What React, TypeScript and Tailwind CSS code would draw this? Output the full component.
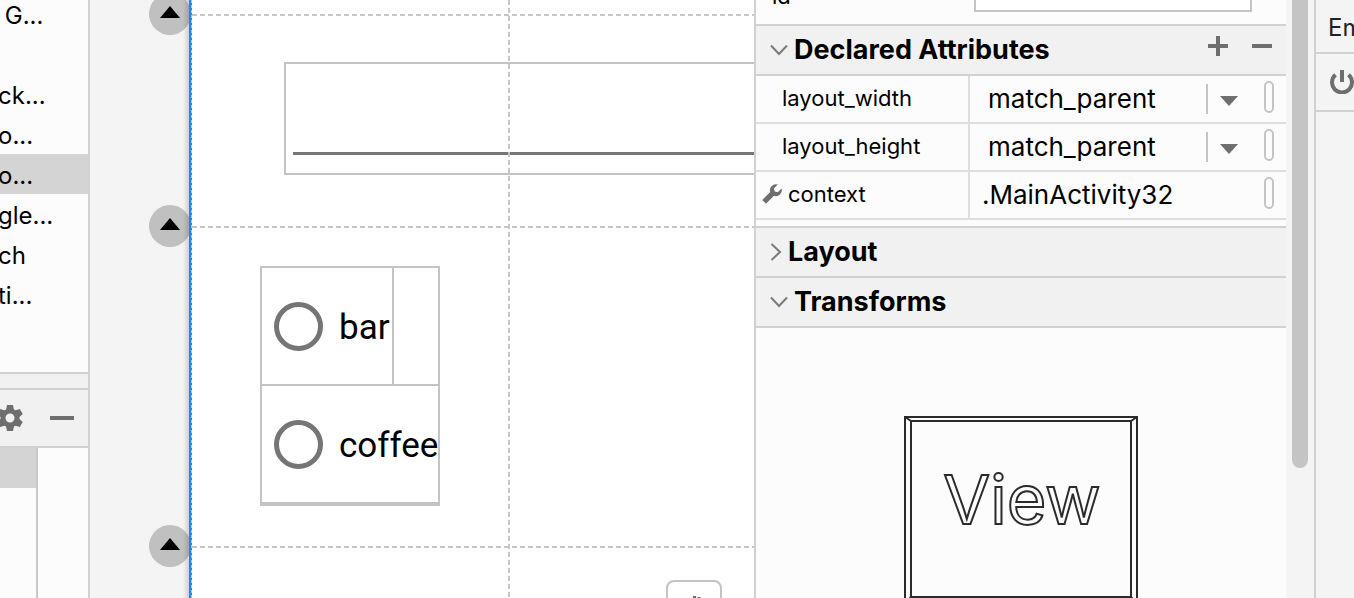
import { useState } from 'react'
import clsx from 'clsx'

interface Attribute {
  name: string
  value: string
  dropdown?: boolean
  tools?: boolean
}

const paletteItems = [
  { id: 1, label: ' G...' },
  { id: 2, label: '' },
  { id: 3, label: 'ck...' },
  { id: 4, label: 'o...' },
  { id: 5, label: 'o...', selected: true },
  { id: 6, label: 'gle...' },
  { id: 7, label: 'ch' },
  { id: 8, label: 'ti...' },
]

const declared: Attribute[] = [
  { name: 'layout_width', value: 'match_parent', dropdown: true },
  { name: 'layout_height', value: 'match_parent', dropdown: true },
  { name: 'context', value: '.MainActivity32', tools: true },
]

const dashX = 'bg-[repeating-linear-gradient(90deg,#c6c6c6_0_5px,transparent_5px_8px)]'
const dashY = 'bg-[repeating-linear-gradient(180deg,#c6c6c6_0_5px,transparent_5px_8px)]'

function Chevron({ open }: { open: boolean }) {
  return open ? (
    <svg width="18" height="18" viewBox="0 0 18 18" fill="none" stroke="#7a7a7a" strokeWidth="2">
      <path d="M1 4.5 9 13l8-8.5" />
    </svg>
  ) : (
    <svg width="12" height="18" viewBox="0 0 12 18" fill="none" stroke="#7a7a7a" strokeWidth="2">
      <path d="M1.500 1 10 9l-8.500 8" />
    </svg>
  )
}

function Gear() {
  return (
    <svg width="26" height="26" viewBox="-13 -13 26 26" className="shrink-0">
      <g fill="#6e6e6e">
        {[0, 60, 120, 180, 240, 300].map(a => (
          <path key={a} d="M-4-8-3-13h6l1 5z" transform={`rotate(${a})`} />
        ))}
      </g>
      <circle r="7" fill="none" stroke="#6e6e6e" strokeWidth="5" />
    </svg>
  )
}

function Wrench() {
  return (
    <svg width="20" height="20" viewBox="0 0 20 20" fill="#6e6e6e">
      <path d="M15.800.6a6 6 0 0 0-7.600 7.500L.3 16l3.700 3.700 7.900-7.900a6 6 0 0 0 7.700-7.300l-3.900 3.700-3-.8-.8-3z" />
    </svg>
  )
}

function SectionHeader({ title, open, onToggle, actions }: {
  title: string
  open: boolean
  onToggle: () => void
  actions?: boolean
}) {
  return (
    <div className="flex h-[52px] shrink-0 items-center border-y-2 border-[#d1d1d1] bg-[#f1f1f1] px-3.5">
      <button
        onClick={onToggle}
        aria-expanded={open}
        className="flex flex-1 items-center gap-1.5 text-left text-[27px] leading-8 font-bold"
      >
        <Chevron open={open} />
        {title}
      </button>
      {actions && (
        <div className="flex gap-6 pb-2">
          <button aria-label="Add attribute">
            <svg width="20" height="20" viewBox="0 0 20 20" fill="#6e6e6e"><path d="M8 0h4v8h8v4h-8v8H8v-8H0V8h8z" /></svg>
          </button>
          <button aria-label="Remove attribute">
            <svg width="20" height="20" viewBox="0 0 20 20" fill="#6e6e6e"><path d="M0 8h20v4H0z" /></svg>
          </button>
        </div>
      )}
    </div>
  )
}

function AttributeRow({ attr }: { attr: Attribute }) {
  const [value, setValue] = useState(attr.value)

  return (
    <div className="flex h-12 border-b-2 border-[#dedede]">
      <label
        htmlFor={attr.name}
        className={clsx('flex w-[212px] shrink-0 items-center gap-1.5 pb-0.5 text-[22px]', attr.tools ? 'pl-1.5' : 'pl-[26px]')}
      >
        {attr.tools && <Wrench />}
        {attr.name}
      </label>
      <div className={clsx('flex min-w-0 flex-1 items-center border-l-2 border-[#dedede] pr-3', attr.dropdown ? 'pl-[18px]' : 'pl-3')}>
        <input
          id={attr.name}
          value={value}
          onChange={e => setValue(e.target.value)}
          className="min-w-0 flex-1 bg-transparent text-[26px] leading-8 outline-none"
        />
        {attr.dropdown && (
          <button aria-label={`${attr.name} values`} className="mr-3.5 flex h-[30px] w-11 items-center border-l-2 border-[#c4c4c4] pt-1 pl-3">
            <svg width="18" height="10" viewBox="0 0 18 10" fill="#6e6e6e"><path d="M0 0h18l-9 10z" /></svg>
          </button>
        )}
        <button aria-label={`Pick ${attr.name} resource`} className="mb-1 h-8 w-2.5 rounded-[5px] border-2 border-[#c4c4c4]" />
      </div>
    </div>
  )
}

function Palette() {
  return (
    <aside className="flex w-[90px] shrink-0 flex-col overflow-hidden border-r-2 border-[#d1d1d1] bg-[#fcfcfc]">
      <ul className="-mt-1.5 h-[378px] shrink-0">
        {paletteItems.map(item => (
          <li key={item.id} className={clsx('h-10 pt-0.5 text-2xl leading-10 whitespace-pre', item.selected && 'bg-[#d4d4d4]')}>
            <span className="-ml-0.5">{item.label}</span>
          </li>
        ))}
      </ul>
      <div className="h-4 shrink-0 border-t-2 border-[#d1d1d1] bg-[#f1f1f1]" />
      <div className="flex h-[60px] shrink-0 items-center justify-between border-y-2 border-[#d1d1d1] bg-[#f1f1f1] pr-3.5">
        <button aria-label="Settings" className="-ml-[3px]"><Gear /></button>
        <button aria-label="Hide">
          <svg width="24" height="4" viewBox="0 0 24 4" fill="#6e6e6e"><path d="M0 0h24v4H0z" /></svg>
        </button>
      </div>
      <div className="flex flex-1">
        <div className="w-[38px] border-r-2 border-[#c9c9c9]">
          <div className="h-10 bg-[#d4d4d4]" />
        </div>
      </div>
    </aside>
  )
}

function Anchor({ className }: { className: string }) {
  return (
    <div className={clsx('absolute left-[59px] flex size-[42px] items-center justify-center rounded-full bg-[#c0c0c0]', className)}>
      <svg width="20" height="12" viewBox="0 0 20 12" className="mb-1"><path d="M0 12 10 0l10 12z" /></svg>
    </div>
  )
}

function RadioOption({ label, className }: { label: string; className?: string }) {
  return (
    <label className={clsx('flex h-[120px] items-center gap-4 border-2 border-[#c4c4c4] pl-3 font-[Roboto,sans-serif] text-[35px] leading-10', className)}>
      <input type="radio" name="drink" className="size-[49px] shrink-0 appearance-none rounded-full border-[5px] border-[#757575] checked:bg-[#757575]" />
      <span className="pt-1">{label}</span>
    </label>
  )
}

function DesignSurface() {
  return (
    <main className="flex min-w-0 flex-1">
      <div className="relative w-[99px] shrink-0 overflow-hidden bg-[#f4f4f4]">
        <Anchor className="-top-[7px]" />
        <Anchor className="top-[205px]" />
        <Anchor className="top-[525px]" />
        <div className="absolute inset-y-0 right-0 w-1.5 bg-linear-to-r from-transparent to-black/15" />
      </div>
      <div className="w-[3px] shrink-0 border-r border-dashed border-[#9fccff] bg-[#1a88ff]" />
      <div className="relative min-w-0 flex-1 overflow-hidden bg-white">
        <div className="absolute top-[62px] right-0 left-[92px] h-[113px] border-y-2 border-l-2 border-[#c4c4c4] pt-[88px] pl-[7px]">
          <div className="h-[3px] bg-[#757575]" />
        </div>

        <div className="absolute top-[266px] left-[68px] w-[180px] border-2 border-[#c4c4c4]">
          <RadioOption label="bar" className="-mt-0.5 -ml-0.5 w-[134px]" />
          <RadioOption label="coffee" className="-mx-0.5 -mt-0.5" />
        </div>

        {/* Guidelines */}
        <div className={clsx('absolute inset-x-0 top-[14px] h-0.5', dashX)} />
        <div className={clsx('absolute inset-x-0 top-[226px] h-0.5', dashX)} />
        <div className={clsx('absolute inset-x-0 top-[546px] h-0.5', dashX)} />
        <div className={clsx('absolute inset-y-0 left-[316px] w-0.5', dashY)} />

        <button aria-label="Pan" className="absolute top-[580px] right-8 flex size-14 items-start justify-center rounded-lg border-2 border-[#c4c4c4] bg-white pt-3.5">
          <svg width="16" height="20" viewBox="0 0 16 20" fill="none" stroke="#6e6e6e" strokeWidth="3">
            <path d="M8.500 9V0M13 9V1" />
          </svg>
        </button>
      </div>
    </main>
  )
}

function ViewBox() {
  return (
    <svg width="234" height="234" viewBox="0 0 234 234" fill="none" stroke="#2b2b2b" strokeWidth="2" className="mx-auto mt-[87px] block shrink-0">
      <rect x="1" y="2" width="232" height="186" />
      <rect x="7" y="6" width="220" height="176" />
      <path d="M1 2l6 4M233 2l-6 4M1 188l6-6M233 188l-6-6" />
      <text x="118" y="109" textAnchor="middle" fontSize="68" fontFamily="Inter, sans-serif">View</text>
    </svg>
  )
}

function AttributesPanel() {
  const [open, setOpen] = useState({ declared: true, layout: false, transforms: true })

  return (
    <section className="flex w-[532px] shrink-0 flex-col overflow-hidden border-l-2 border-[#d1d1d1] bg-[#fcfcfc]">
      <div className="flex h-6 shrink-0 items-end justify-between pr-[34px] pb-3 pl-4">
        <label htmlFor="view-id" className="pb-1 text-[22px] leading-6">id</label>
        <input id="view-id" className="h-12 w-[278px] border-2 border-[#c4c4c4] bg-white px-2 outline-none" />
      </div>
      <SectionHeader title="Declared Attributes" open={open.declared} onToggle={() => setOpen({ ...open, declared: !open.declared })} actions />
      {open.declared && (
        <div className="shrink-0 pb-1.5">
          {declared.map(attr => <AttributeRow key={attr.name} attr={attr} />)}
        </div>
      )}
      <SectionHeader title="Layout" open={open.layout} onToggle={() => setOpen({ ...open, layout: !open.layout })} />
      <div className="-mt-0.5 shrink-0">
        <SectionHeader title="Transforms" open={open.transforms} onToggle={() => setOpen({ ...open, transforms: !open.transforms })} />
      </div>
      {open.transforms && <ViewBox />}
    </section>
  )
}

export default function App() {
  return (
    <div className="flex h-screen overflow-hidden bg-[#f4f4f4] font-[Inter,sans-serif] text-black">
      <Palette />
      <DesignSurface />
      <AttributesPanel />
      <div className="w-7 shrink-0 px-1.5">
        <div className="h-[468px] rounded-b-full bg-[#c4c4c4]" />
      </div>
      <aside className="w-10 shrink-0 overflow-hidden border-l-2 border-[#d1d1d1]">
        <div className="h-[54px] border-b-2 border-[#d1d1d1] pt-3 pl-3 text-2xl text-[#222]">Em</div>
        <div className="h-[58px] border-b-2 border-[#d1d1d1] pt-4 pl-3.5">
          <button aria-label="Power">
            <svg width="24" height="24" viewBox="0 0 24 24" fill="none" stroke="#6e6e6e" strokeWidth="4">
              <path d="M12 0v12M5.500 4.800a10 10 0 1 0 13 0" />
            </svg>
          </button>
        </div>
      </aside>
    </div>
  )
}
